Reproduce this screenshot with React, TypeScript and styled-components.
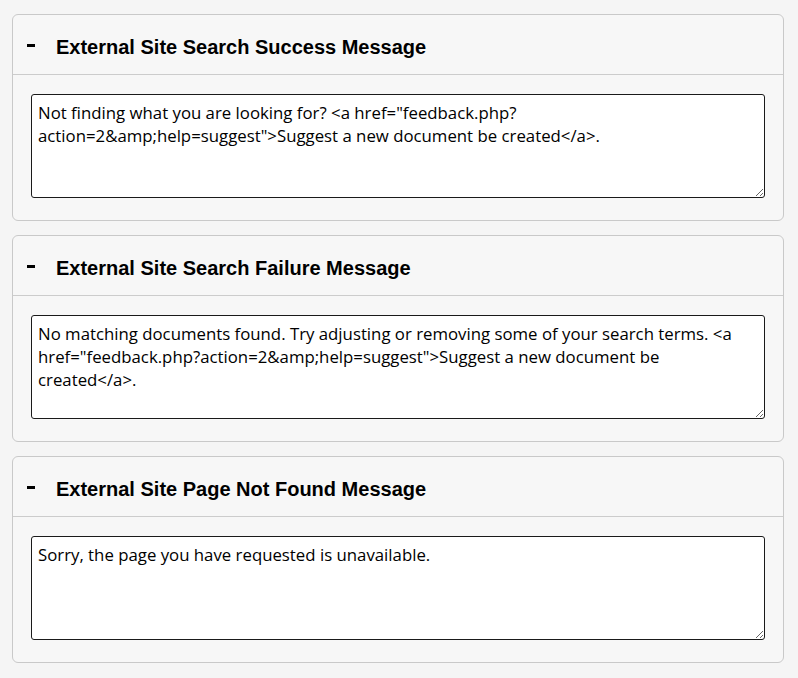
import React from "react";
import styled, { createGlobalStyle } from "styled-components";

const Global = createGlobalStyle`
  html, body {
    margin: 0;
    padding: 0;
    background: #f5f5f5;
  }
  body {
    font-family: "Liberation Sans", Arial, sans-serif;
  }
`;

const Page = styled.div`
  display: flex;
  flex-direction: column;
  gap: 14px;
  padding: 14px 14px 14px 12px;
`;

const Panel = styled.section`
  background: #f7f7f7;
  border: 1px solid #c9c9c9;
  border-radius: 6px;
`;

const Header = styled.div`
  display: flex;
  align-items: center;
  height: 60px;
  padding: 6px 14px 0 14px;
  border-bottom: 1px solid #cccccc;
  box-sizing: border-box;
`;

const Toggle = styled.span`
  width: 8px;
  height: 3px;
  background: #000;
  margin-right: 21px;
  margin-top: -4px;
`;

const Title = styled.h2`
  margin: 0;
  font-family: "Liberation Sans", Arial, sans-serif;
  font-weight: 700;
  font-size: 20px;
  color: #000;
`;

const Body = styled.div`
  padding: 19px 18px 22px 18px;
`;

const Editor = styled.textarea`
  display: block;
  width: 100%;
  box-sizing: border-box;
  height: 104px;
  margin: 0;
  padding: 6px 6px;
  border: 1px solid #1a1a1a;
  border-radius: 3px;
  background: #fff;
  color: #000;
  font-family: "Open Sans", "Noto Sans", sans-serif;
  font-size: 16.8px;
  line-height: 23px;
  resize: vertical;
  outline: none;
`;

const items = [
  {
    title: "External Site Search Success Message",
    text: 'Not finding what you are looking for? <a href="feedback.php?action=2&amp;help=suggest">Suggest a new document be created</a>.',
  },
  {
    title: "External Site Search Failure Message",
    text: 'No matching documents found. Try adjusting or removing some of your search terms. <a href="feedback.php?action=2&amp;help=suggest">Suggest a new document be created</a>.',
  },
  {
    title: "External Site Page Not Found Message",
    text: "Sorry, the page you have requested is unavailable.",
  },
];

export default function App() {
  return (
    <>
      <Global />
      <Page>
        {items.map((it) => (
          <Panel key={it.title}>
            <Header>
              <Toggle />
              <Title>{it.title}</Title>
            </Header>
            <Body>
              <Editor defaultValue={it.text} />
            </Body>
          </Panel>
        ))}
      </Page>
    </>
  );
}
